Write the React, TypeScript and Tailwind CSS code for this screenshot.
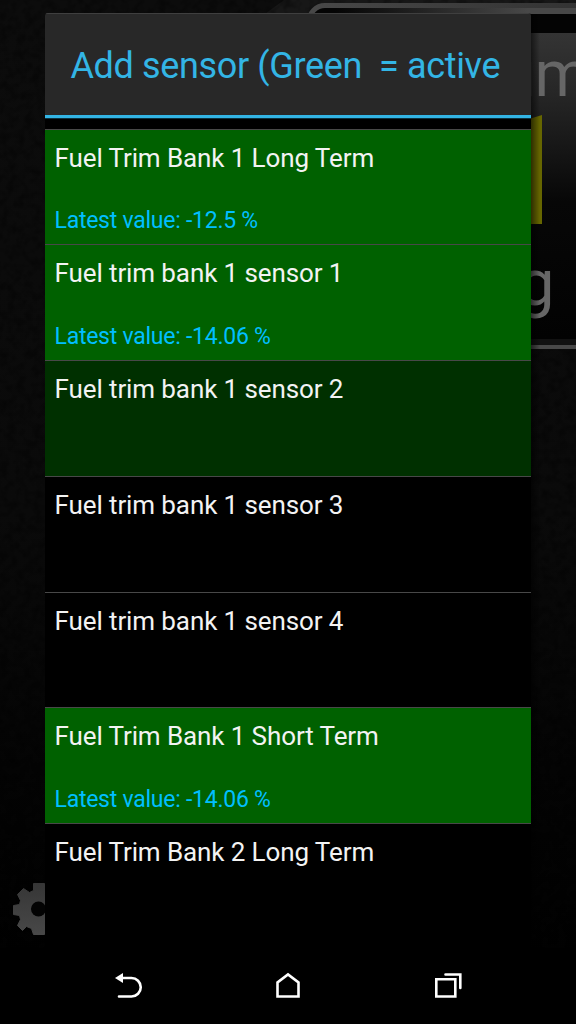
import React from "react";

type Sensor = {
  name: string;
  value?: string;
  tone: string;
};

const sensors: Sensor[] = [
  { name: "Fuel Trim Bank 1 Long Term", value: "-12.5 %", tone: "bg-[#006100]" },
  { name: "Fuel trim bank 1 sensor 1", value: "-14.06 %", tone: "bg-[#006100]" },
  { name: "Fuel trim bank 1 sensor 2", tone: "bg-[#003000]" },
  { name: "Fuel trim bank 1 sensor 3", tone: "bg-black" },
  { name: "Fuel trim bank 1 sensor 4", tone: "bg-black" },
  { name: "Fuel Trim Bank 1 Short Term", value: "-14.06 %", tone: "bg-[#006100]" },
  { name: "Fuel Trim Bank 2 Long Term", tone: "bg-black" },
];

// dimmed dashboard behind the dialog
function Dashboard() {
  return (
    <svg className="absolute inset-0" width="576" height="1024" viewBox="0 0 576 1024">
      <defs>
        <linearGradient id="page" x1="0" y1="0" x2="0" y2="1">
          <stop offset="0" stopColor="#0c0c0c" />
          <stop offset="0.5" stopColor="#0a0a0a" />
          <stop offset="0.75" stopColor="#040404" />
          <stop offset="1" stopColor="#000" />
        </linearGradient>
        <linearGradient id="panel" x1="0" y1="0" x2="0" y2="1">
          <stop offset="0" stopColor="#343434" />
          <stop offset="0.2" stopColor="#262626" />
          <stop offset="0.55" stopColor="#070707" />
          <stop offset="1" stopColor="#020202" />
        </linearGradient>
        <linearGradient id="rim" x1="0" y1="0" x2="1" y2="0">
          <stop offset="0" stopColor="#484848" />
          <stop offset="1" stopColor="#303030" />
        </linearGradient>
        <linearGradient id="shine" x1="0" y1="0" x2="1" y2="0">
          <stop offset="0" stopColor="#484848" stopOpacity="0" />
          <stop offset="0.8" stopColor="#484848" />
        </linearGradient>
        <linearGradient id="gear" x1="0" y1="0" x2="0" y2="1">
          <stop offset="0" stopColor="#363636" />
          <stop offset="1" stopColor="#484848" />
        </linearGradient>
        <linearGradient id="edge" x1="0" y1="0" x2="1" y2="0">
          <stop offset="0" stopColor="#000" stopOpacity="0.55" />
          <stop offset="1" stopColor="#000" stopOpacity="0" />
        </linearGradient>
        <filter id="grain" x="0" y="0" width="100%" height="100%">
          <feTurbulence type="fractalNoise" baseFrequency="0.12" numOctaves="2" />
          <feColorMatrix values="0 0 0 0 0  0 0 0 0 0  0 0 0 0 0  3 0 0 0 -1.3" />
        </filter>
      </defs>
      <rect width="576" height="1024" fill="url(#page)" />
      <path d="M262 16 284 0H576V16Z" fill="#171717" />
      <rect width="576" height="948" filter="url(#grain)" opacity="0.3" />
      <rect x="309" y="5.5" width="310" height="341" rx="16" fill="#040404" stroke="url(#rim)" strokeWidth="5" />
      <rect x="335" y="8" width="241" height="6" fill="url(#shine)" />
      <rect x="330" y="33" width="246" height="306" fill="url(#panel)" />
      <rect x="330" y="339" width="246" height="6" fill="#111" />
      <rect x="330" y="345" width="246" height="4" fill="#484848" />
      <text x="534.5" y="96" fontSize="64" fill="#666" fontFamily="Roboto, sans-serif">m</text>
      <rect x="531" y="62" width="1" height="34" fill="#333" />
      <path d="M500 128 542 115V224H500Z" fill="#666600" />
      <text x="554.5" y="304.500" fontSize="64" fill="#666" textAnchor="end" fontFamily="Roboto, sans-serif">g</text>
      <rect x="531" y="14" width="9" height="930" fill="url(#edge)" />
      <path
        d="M33.500 883.500h11v51h-11l-2-6-5-2-4 4-5-5 3-6-1-4-6-1v-9l6-1 1-4-3-6 6-6 6 4 4-2Z"
        fill="url(#gear)"
        stroke="url(#gear)"
        strokeLinejoin="round"
      />
      <circle cx="38.500" cy="909" r="7.500" fill="#030303" />
      <rect y="948" width="576" height="76" fill="#000" />
    </svg>
  );
}

function SensorRow({ name, value, tone }: Sensor) {
  return (
    <li className={`flex h-[115.75px] flex-col justify-between border-t border-[#484848] px-[10px] pt-[12px] pb-[9.5px] ${tone}`}>
      <span className="-ml-[0.5px] text-[26px] leading-8 tracking-[-0.1px] whitespace-nowrap text-[#f3f3f3]">{name}</span>
      {value && (
        <span className="-ml-[0.5px] text-[23px] leading-[29px] tracking-[-0.25px] whitespace-nowrap text-[#00bfff]">Latest value: {value}</span>
      )}
    </li>
  );
}

function NavigationBar() {
  return (
    <nav className="grid h-[76px] grid-cols-3 items-center px-12">
      <svg className="mx-auto" width="32" height="32" viewBox="112 970 32 32" fill="none" stroke="#fff" strokeWidth="2.6">
        <path d="M121 978H131.500A9.250 9.250 0 0 1 131.500 996.500H119" strokeLinecap="round" />
        <path d="m115 978 8-5v10Z" fill="#fff" stroke="none" />
      </svg>
      <svg className="mx-auto" width="32" height="32" viewBox="272 970 32 32" fill="none" stroke="#fff" strokeWidth="2.6">
        <path d="M277.500 996.500V982.500L288 974.500 298.500 982.500V996.500Z" />
      </svg>
      <svg className="mx-auto" width="32" height="32" viewBox="432 970 32 32" fill="none" stroke="#fff" strokeWidth="2.6">
        <path d="M436.300 979.300H455.300V996.500H436.300Z" />
        <path d="M445.500 974.500H460.300V988" strokeLinecap="round" />
      </svg>
    </nav>
  );
}

export default function App() {
  return (
    <main className="relative h-[1024px] w-[576px] overflow-hidden bg-black font-['Roboto',sans-serif]">
      <Dashboard />
      <div className="relative flex h-full flex-col pt-[13px]">
        <section className="mx-[45px] flex-1 overflow-hidden rounded-t-[3px] bg-black">
          <header className="flex h-[105px] items-center border-t border-b-[3px] border-t-[#3f3f3f] border-b-[#33b5e5] bg-[#282828] pt-[3px] pl-[25.500px]">
            <h1 className="text-[36px] leading-none tracking-[-0.36px] whitespace-pre text-[#33b5e5]">{"Add sensor (Green  = active"}</h1>
          </header>
          <ul className="border-t border-[#0d3340] pt-[9.500px]">
            {sensors.map((sensor) => (
              <SensorRow key={sensor.name} {...sensor} />
            ))}
          </ul>
        </section>
        <NavigationBar />
      </div>
    </main>
  );
}
